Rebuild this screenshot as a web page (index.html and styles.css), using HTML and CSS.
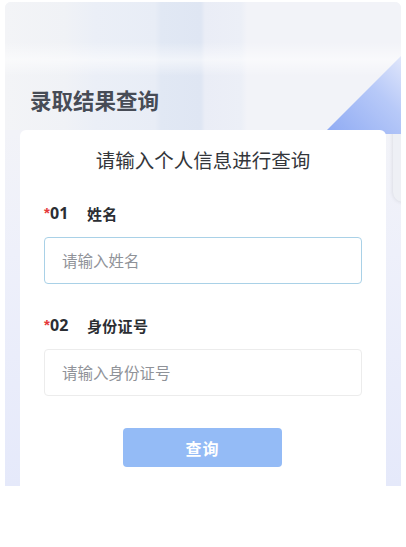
FILE: index.html
```html
<!DOCTYPE html>
<html lang="zh-CN">
<head>
<meta charset="utf-8">
<link rel="stylesheet" href="styles.css">
</head>
<body>
<div class="panel">
  <div class="deco-stripes"></div>
  <div class="deco-tab"></div>
  <div class="deco-tri"></div>
  <header class="hero">
    <h1 class="hero-title">录取结果查询</h1>
  </header>
  <main class="card">
    <h2 class="card-title">请输入个人信息进行查询</h2>
    <div class="field">
      <div class="label"><span class="req">*</span><span class="num">01</span><span class="name">姓名</span></div>
      <div class="input input-active">请输入姓名</div>
    </div>
    <div class="field">
      <div class="label"><span class="req">*</span><span class="num">02</span><span class="name">身份证号</span></div>
      <div class="input">请输入身份证号</div>
    </div>
    <div class="actions">
      <button class="btn">查询</button>
    </div>
  </main>
</div>
</body>
</html>
```
FILE: styles.css
```css
html, body {
  margin: 0;
  padding: 0;
  background: #ffffff;
}
body {
  font-family: "Noto Sans CJK SC", "Noto Sans", sans-serif;
}
.panel {
  position: relative;
  margin: 2px 5px 0;
  height: 484px;
  border-radius: 6px 6px 0 0;
  overflow: hidden;
  background: linear-gradient(180deg, #f3f4f8 0, #f2f3f8 130px, #eef0fa 250px, #e5e9fa 484px);
}
.deco-stripes {
  position: absolute;
  left: 0;
  top: 0;
  width: 100%;
  height: 128px;
  background:
    linear-gradient(180deg, rgba(255,255,255,0) 40px, rgba(255,255,255,0.55) 58px, rgba(255,255,255,0) 74px),
    linear-gradient(90deg, #f3f4f7 0, #f0f2f6 60px, #ebeff7 90px, #e8edf6 150px, #e1e8f4 156px, #dfe6f3 196px, #eaedf6 200px, #eceff7 236px, #f2f3f8 242px, #f2f3f8 100%);
}
.deco-tab {
  position: absolute;
  left: 388px;
  top: 98px;
  width: 30px;
  height: 102px;
  border-radius: 10px;
  background: #eef0f5;
  box-shadow: 0 0 4px rgba(0,0,0,0.12);
}
.deco-tri {
  position: absolute;
  left: 318px;
  top: 52px;
  width: 80px;
  height: 80px;
  clip-path: polygon(0 100%, 100% 0, 100% 100%);
  background: linear-gradient(225deg, #e3e9fb 0, #b7c9f8 40%, #8da9f3 100%);
}
.hero {
  position: relative;
  height: 128px;
  box-sizing: border-box;
  padding: 84px 0 0 25px;
}
.hero-title {
  margin: 0;
  font-size: 21.5px;
  line-height: 28px;
  font-weight: 700;
  color: #474c56;
  letter-spacing: 0;
}
.card {
  position: relative;
  margin: 0 15px;
  height: 356px;
  background: #ffffff;
  border-radius: 6px 6px 0 0;
  box-sizing: border-box;
  padding: 16px 24px 0;
}
.card-title {
  margin: 0;
  text-align: center;
  font-size: 19.5px;
  line-height: 28px;
  font-weight: 400;
  color: #33363b;
}
.field {
  margin-top: 28px;
}
.field + .field {
  margin-top: 30px;
}
.label {
  display: flex;
  align-items: center;
  height: 22px;
  font-size: 15px;
  font-weight: 700;
  color: #2b2e33;
}
.req {
  color: #e5393a;
  width: 6px;
  font-family: "Liberation Sans", sans-serif;
  position: relative;
  top: -1px;
}
.num {
  font-family: "Noto Sans", "Liberation Sans", sans-serif;
  font-size: 16px;
  width: 37px;
}
.name {
  letter-spacing: 0.3px;
}
.input {
  margin-top: 13px;
  height: 47px;
  box-sizing: border-box;
  border: 1px solid #ececec;
  border-radius: 4px;
  padding: 0 17px 2px;
  display: flex;
  align-items: center;
  font-size: 15.5px;
  color: #8f9298;
}
.input-active {
  border-color: #a9d1e7;
}
.actions {
  display: flex;
  justify-content: center;
  margin-top: 32px;
  padding-right: 1px;
}
.btn {
  width: 159px;
  height: 39px;
  border: 0;
  border-radius: 4px;
  background: #94bbf6;
  color: #ffffff;
  font-family: "Noto Sans CJK SC", sans-serif;
  font-size: 16px;
  font-weight: 700;
  letter-spacing: 1px;
}
```
